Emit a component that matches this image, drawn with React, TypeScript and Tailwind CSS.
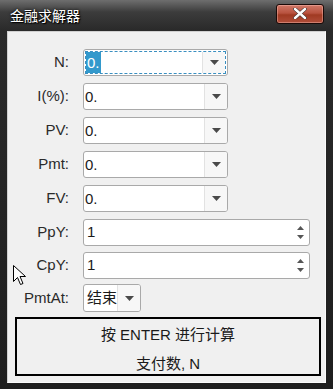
import React from 'react'

const FONT = '"Liberation Sans", "Noto Sans CJK SC", sans-serif'

function Caret() {
  return (
    <svg width="9" height="5" viewBox="0 0 9 5">
      <path d="M0 0 H9 L4.5 5 Z" fill="#4a4a4a" />
    </svg>
  )
}

function DropField({ value, focused = false, width = 'w-[145px]' }: { value: string; focused?: boolean; width?: string }) {
  return (
    <div
      className={`flex h-[27px] ${width} rounded-[3px] border border-[#a9a9a9] bg-white ${focused ? 'p-[1px]' : ''}`}
    >
      <div className={`flex flex-1 items-stretch ${focused ? 'border border-dashed border-[#3a8fc0]' : ''}`}>
        <div className="flex flex-1 items-center">
          <span
            className={`px-[1px] text-[15px] leading-[21px] ${focused ? 'bg-[#3399cc] text-white' : 'text-[#1a1a1a]'}`}
          >
            {value}
          </span>
        </div>
        <div className="flex w-[23px] items-center justify-center rounded-r-[2px] border-l border-[#e2e2e2] bg-[#f7f7f7]">
          <Caret />
        </div>
      </div>
    </div>
  )
}

function SpinField({ value }: { value: string }) {
  return (
    <div className="flex h-[27px] w-[227px] items-stretch rounded-[3px] border border-[#a9a9a9] bg-white">
      <div className="flex flex-1 items-center pl-[3px] text-[15px] text-[#1a1a1a]">{value}</div>
      <div className="flex w-[16px] flex-col items-center justify-center gap-[5px] pr-[2px]">
        <svg width="7" height="4" viewBox="0 0 7 4">
          <path d="M0 4 H7 L3.5 0 Z" fill="#555" />
        </svg>
        <svg width="7" height="4" viewBox="0 0 7 4">
          <path d="M0 0 H7 L3.5 4 Z" fill="#555" />
        </svg>
      </div>
    </div>
  )
}

function Row({ label, children, className = '' }: { label: string; children: React.ReactNode; className?: string }) {
  return (
    <div className={`flex items-center ${className}`}>
      <div className="w-[62px] pr-[1px] text-right text-[15px] text-[#2a2a2a]">{label}</div>
      <div className="ml-[13px]">{children}</div>
    </div>
  )
}

export default function App() {
  return (
    <div
      className="relative flex h-[389px] w-[333px] flex-col overflow-hidden bg-[linear-gradient(to_bottom,#6e6e6e_0px,#3c3c3c_12px,#2a2a2a_30px,#1e1e1e_389px)]"
      style={{ fontFamily: FONT }}
    >
      {/* title bar */}
      <div className="flex h-[31px] items-center justify-between pl-[10px] pr-[9px]">
        <span className="pt-[2px] text-[14px] text-white [text-shadow:0_0_3px_#000,1px_1px_1px_#000]">金融求解器</span>
        <div className="mt-[-4px] flex h-[20px] w-[48px] items-center justify-center rounded-[3px] border border-[#1a0a08] bg-[linear-gradient(to_bottom,#d07868_0%,#b8533f_45%,#a03a22_55%,#b04e3a_100%)] shadow-[inset_0_0_0_1px_rgba(255,200,190,0.4)]">
          <svg width="14" height="11" viewBox="0 0 14 11">
            <path d="M2 1 L12 10 M12 1 L2 10" stroke="#333" strokeWidth="3.6" strokeLinecap="round" />
            <path d="M2 1 L12 10 M12 1 L2 10" stroke="#fff" strokeWidth="2.4" strokeLinecap="round" />
          </svg>
        </div>
      </div>

      {/* client area */}
      <div className="mx-[7px] flex h-[352px] flex-col border border-[#fafafa] border-t-[#d0d0d0] border-l-[#d0d0d0] bg-[#f0f0f0] pt-[17px]">
        <Row label="N:">
          <DropField value="0." focused />
        </Row>
        <Row label="I(%):" className="mt-[7px]">
          <DropField value="0." />
        </Row>
        <Row label="PV:" className="mt-[7px]">
          <DropField value="0." />
        </Row>
        <Row label="Pmt:" className="mt-[7px]">
          <DropField value="0." />
        </Row>
        <Row label="FV:" className="mt-[7px]">
          <DropField value="0." />
        </Row>
        <Row label="PpY:" className="mt-[7px]">
          <SpinField value="1" />
        </Row>
        <Row label="CpY:" className="mt-[6px]">
          <SpinField value="1" />
        </Row>
        <Row label="PmtAt:" className="mt-[5px]">
          <div className="flex h-[28px] w-[58px] items-stretch rounded-[3px] border border-[#a9a9a9] bg-white">
            <div className="flex flex-1 items-center pl-[3px] text-[15px] text-[#1a1a1a]">结束</div>
            <div className="flex w-[23px] items-center justify-center rounded-r-[2px] border-l border-[#e2e2e2] bg-[#f7f7f7]">
              <Caret />
            </div>
          </div>
        </Row>

        <div className="ml-[7px] mt-[5px] flex h-[59px] w-[306px] flex-col items-center gap-[9px] border-2 border-black pt-[6px] text-[15px] text-[#1a1a1a]">
          <div className="leading-[20px]">按 ENTER 进行计算</div>
          <div className="leading-[20px]">支付数, N</div>
        </div>
      </div>

      {/* mouse pointer */}
      <svg className="absolute left-[13px] top-[265px]" width="13" height="21" viewBox="0 0 13 21">
        <path d="M0.5 0.5 L0.5 16.5 L4.5 12.5 L7.5 19.5 L10 18.5 L7 11.5 L12.5 11.5 Z" fill="#fff" stroke="#000" strokeWidth="1" />
      </svg>
    </div>
  )
}
